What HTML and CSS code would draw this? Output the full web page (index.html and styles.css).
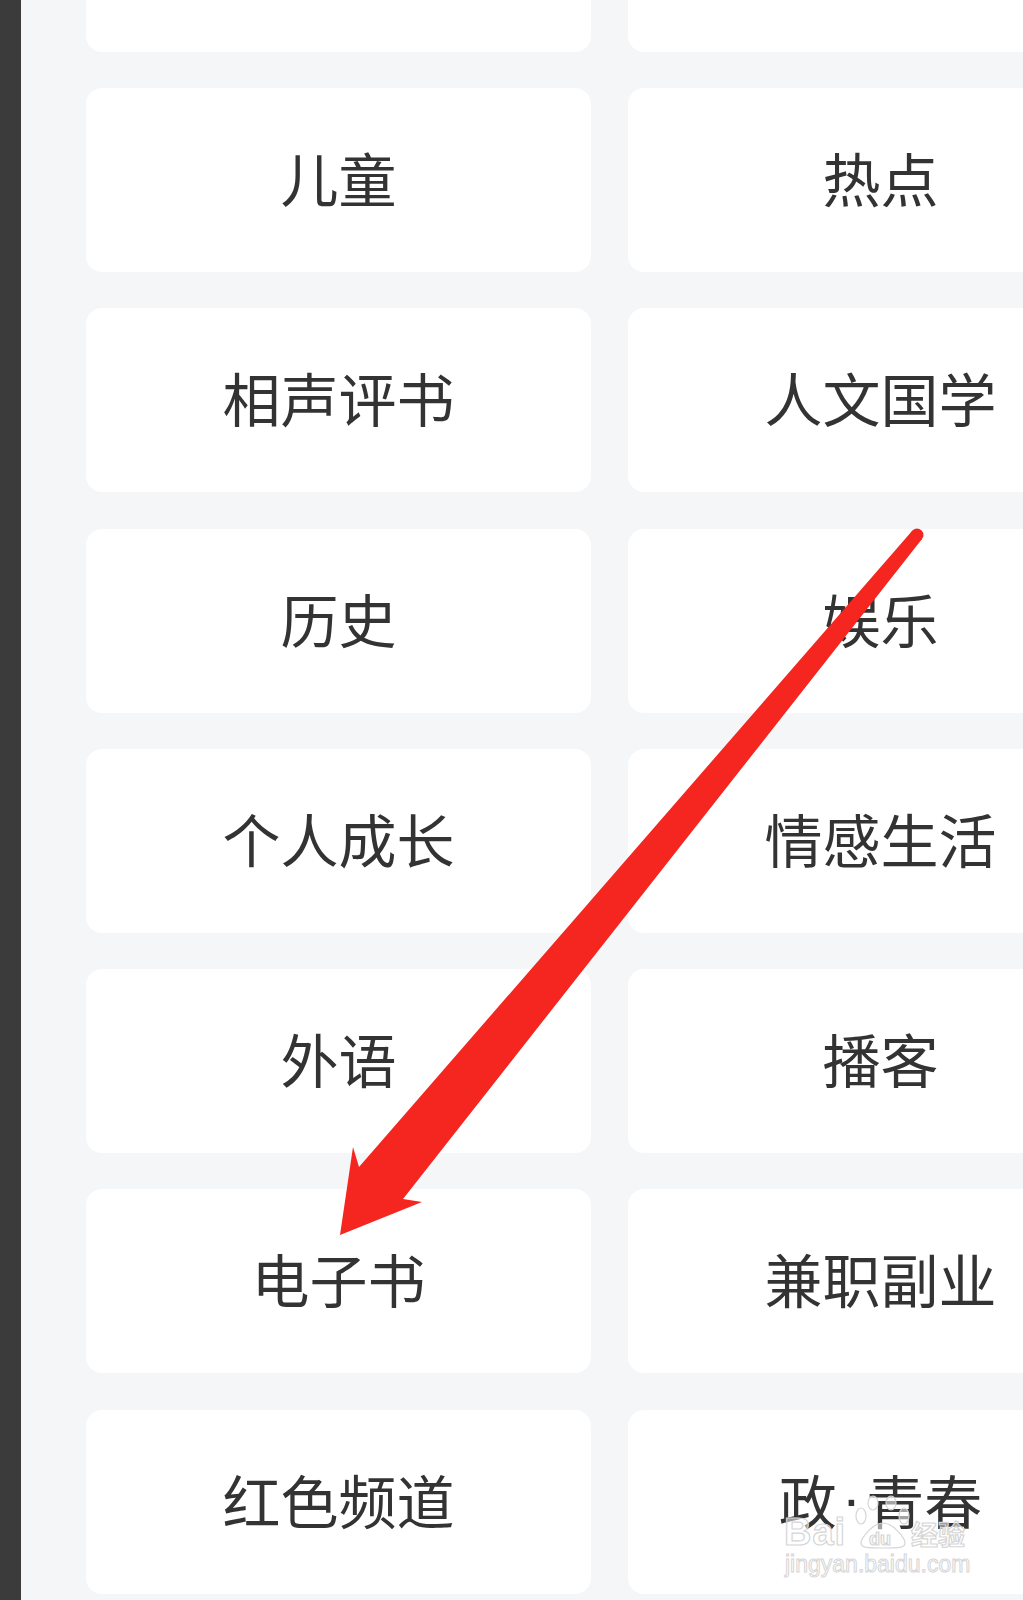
FILE: index.html
```html
<!DOCTYPE html>
<html lang="zh">
<head>
  <meta charset="UTF-8">
  <title>分类</title>
  <meta name="viewport" content="width=device-width, initial-scale=1.0">
  <link rel="stylesheet" href="styles.css">
</head>
<body>

  <div class="page">
    <div class="side-bar"></div>

    <div class="main">
      <div class="grid">
        <div class="card"></div>
        <div class="card"></div>
        <div class="card">儿童</div>
        <div class="card">热点</div>
        <div class="card">相声评书</div>
        <div class="card">人文国学</div>
        <div class="card">历史</div>
        <div class="card">娱乐</div>
        <div class="card">个人成长</div>
        <div class="card">情感生活</div>
        <div class="card">外语</div>
        <div class="card">播客</div>
        <div class="card">电子书</div>
        <div class="card">兼职副业</div>
        <div class="card">红色频道</div>
        <div class="card">政<span class="dot">·</span>青春</div>
      </div>
    </div>

    <!-- 标注箭头 + 水印 -->
    <svg class="overlay" width="1023" height="1600" viewBox="0 0 1023 1600">
      <g class="arrow">
        <circle cx="917" cy="535" r="6.5"/>
        <polygon points="912,531 359,1167 353,1147 340,1235 422,1202 403,1199 922,539"/>
      </g>
      <g class="wm">
        <text x="784" y="1545" class="wm-big">Bai</text>
        <ellipse cx="861" cy="1516" rx="5" ry="8"/>
        <ellipse cx="873" cy="1503" rx="5" ry="7"/>
        <ellipse cx="891" cy="1503" rx="5" ry="7"/>
        <ellipse cx="904" cy="1516" rx="5" ry="8"/>
        <path d="M883 1523 C873 1523 861 1538 861 1543 C861 1548 867 1548 883 1548 C899 1548 905 1548 905 1543 C905 1538 893 1523 883 1523 Z"/>
        <text x="869" y="1545" class="wm-du">du</text>
        <text x="911" y="1545" class="wm-cjk">经验</text>
        <text x="785" y="1572" class="wm-url">jingyan.baidu.com</text>
      </g>
    </svg>
  </div>

</body>
</html>
```

FILE: styles.css
```css
/* 页面底色 */
body {
  margin: 0;
  padding: 0;
  background: #f5f6f8;
  font-family: "Noto Sans CJK SC", "Noto Sans", sans-serif;
  overflow: hidden;
}

.page {
  position: relative;
  display: flex;
  width: 1023px;
  height: 1600px;
  overflow: hidden;
}

/* 左侧深色条 */
.side-bar {
  flex: 0 0 21px;
  background: #3b3b3b;
}

/* 分类卡片 */
.main {
  flex: 1;
  padding-left: 65px;
  overflow: hidden;
}
.grid {
  display: grid;
  grid-template-columns: 505px 505px;
  grid-auto-rows: 184px;
  column-gap: 37px;
  row-gap: 36.3px;
  margin-top: -132.3px;
}
.card {
  display: flex;
  align-items: center;
  justify-content: center;
  box-sizing: border-box;
  padding-bottom: 6px;
  background: #fff;
  border-radius: 16px;
  font-size: 58px;
  color: #333;
  line-height: 1;
}
.card .dot {
  font-family: "Liberation Sans", sans-serif;
  margin: 0 5px;
}

/* 覆盖层 */
.overlay {
  position: absolute;
  top: 0;
  left: 0;
  pointer-events: none;
}
.arrow {
  fill: #f4261f;
}
.wm {
  fill: rgba(255,255,255,0.55);
  stroke: #d6d6d6;
  stroke-width: 1.2;
}
.wm-big {
  font-family: "Liberation Sans", sans-serif;
  font-weight: bold;
  font-size: 38px;
  letter-spacing: 1px;
}
.wm-du {
  font-family: "Liberation Sans", sans-serif;
  font-weight: bold;
  font-size: 18px;
}
.wm-cjk {
  font-family: "Noto Sans CJK SC", sans-serif;
  font-weight: bold;
  font-size: 27px;
}
.wm-url {
  font-family: "Liberation Sans", sans-serif;
  font-size: 23px;
  stroke-width: 1;
}
```
